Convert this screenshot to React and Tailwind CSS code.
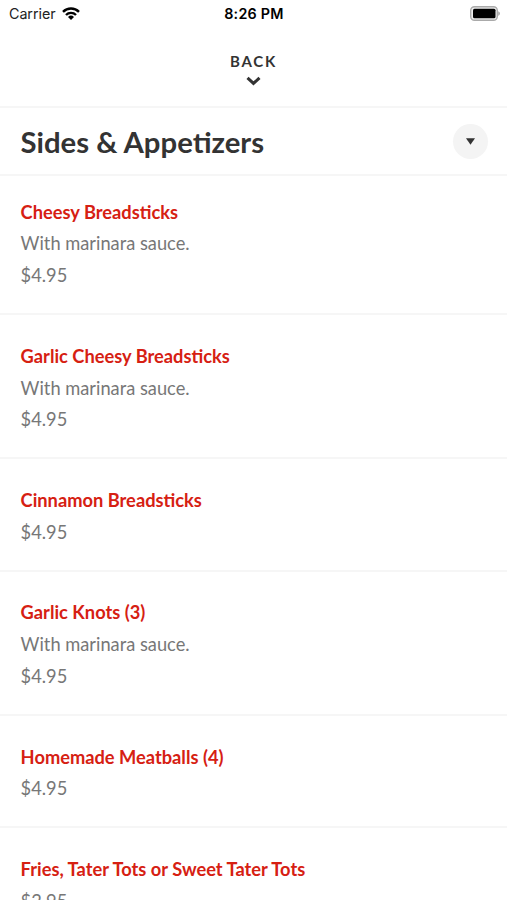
const items = [
    { name: 'Cheesy Breadsticks', description: 'With marinara sauce.', price: '$4.95' },
    { name: 'Garlic Cheesy Breadsticks', description: 'With marinara sauce.', price: '$4.95' },
    { name: 'Cinnamon Breadsticks', price: '$4.95' },
    { name: 'Garlic Knots (3)', description: 'With marinara sauce.', price: '$4.95' },
    { name: 'Homemade Meatballs (4)', price: '$4.95' },
    { name: 'Fries, Tater Tots or Sweet Tater Tots', price: '$2.95' },
];

function StatusBar() {
    return (
        <div className="grid grid-cols-3 items-center h-[27px] pl-[9px] pr-[7px] font-['Inter',sans-serif] text-[14.3px] text-black">
            <div className="flex items-center gap-[6px] text-[#222]">
                <span className="tracking-[-0.05px]">Carrier</span>
                <svg className="-mt-px" width="18" height="13" viewBox="0 0 18 13" fill="none" stroke="black" strokeWidth="2.4">
                    <path d="M1 4.8a11.3 11.3 0 0 1 16 0" />
                    <path d="M4 8a7 7 0 0 1 10 0" />
                    <path d="M9 13L6 10a4.3 4.3 0 0 1 6 0z" fill="black" stroke="none" />
                </svg>
            </div>
            <span className="text-center font-semibold tracking-[0.25px] -ml-px">8:26 PM</span>
            <svg className="justify-self-end -mt-px" width="30" height="15" viewBox="0 0 30 15">
                <rect x="0.7" y="0.7" width="26.6" height="13.6" rx="3.8" fill="#eee" stroke="#aaa" strokeWidth="1.4" />
                <rect x="3" y="2.7" width="22.5" height="9.6" rx="1.5" fill="black" />
                <path d="M28.3 5.2c2 .9 2 3.7 0 4.6z" fill="#999" />
            </svg>
        </div>
    );
}

function MenuItem({ item }) {
    return (
        <li className="border-b-2 border-[#f6f6f6] pt-[25.6px] first:pt-[20.7px] pb-[21.2px] pl-[20.6px] text-[18.27px] leading-[31.8px] text-[#777]">
            <h2 className="font-bold text-[#d62012]">{item.name}</h2>
            {item.description && <p>{item.description}</p>}
            <p>{item.price}</p>
        </li>
    );
}

export default function App() {
    return (
        <div className="h-[900px] overflow-hidden bg-white font-['Lato',sans-serif]">
            <StatusBar />
            <button className="flex flex-col items-center w-full h-[79px] pt-[24px] text-[#333]">
                <span className="text-[15px] leading-[20px] font-bold tracking-[1.8px]">BACK</span>
                <svg className="mt-[5px] -ml-px" width="15" height="10" viewBox="0 0 15 10" fill="none" stroke="currentColor" strokeWidth="3">
                    <path d="M1.5 1.8l6 5.6 6-5.6" />
                </svg>
            </button>
            <header className="flex items-center justify-between h-[70px] border-y-2 border-[#f6f6f6] pl-[20.5px] pr-[19px]">
                <h1 className="pt-px text-[29.3px] font-bold text-[#333]">Sides &amp; Appetizers</h1>
                <button className="flex items-center justify-center size-[35px] rounded-full bg-[#f4f4f4]">
                    <svg width="9" height="7" viewBox="0 0 9 7" fill="#333">
                        <path d="M0 .3h9L4.5 6.7z" />
                    </svg>
                </button>
            </header>
            <ul>
                {items.map((item) => (
                    <MenuItem key={item.name} item={item} />
                ))}
            </ul>
        </div>
    );
}
